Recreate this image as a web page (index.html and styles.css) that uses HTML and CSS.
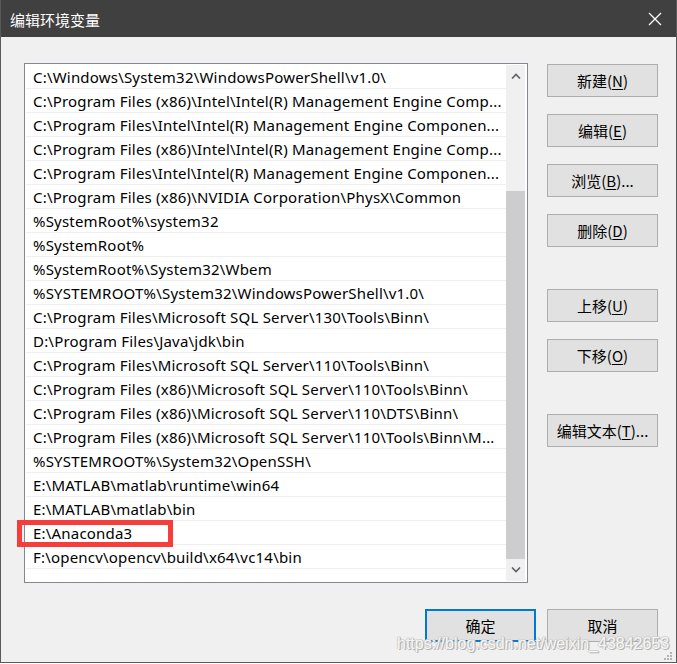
FILE: index.html
```html
<!DOCTYPE html>
<html lang="zh-CN">
<head>
  <meta charset="UTF-8" />
  <meta name="viewport" content="width=device-width, initial-scale=1.0"/>
  <title>编辑环境变量</title>
  <link rel="stylesheet" href="styles.css">
</head>
<body>
  <div class="window">
    <div class="titlebar">
      <span class="title">编辑环境变量</span>
      <svg class="close" width="14" height="14" viewBox="0 0 14 14">
        <path d="M1 1 L13 13 M13 1 L1 13" stroke="#fff" stroke-width="1.3" fill="none"/>
      </svg>
    </div>

    <div class="client">
      <div class="main">
        <div class="list">
          <div class="rows">
            <div class="row">C:\Windows\System32\WindowsPowerShell\v1.0\</div>
            <div class="row">C:\Program Files (x86)\Intel\Intel(R) Management Engine Comp...</div>
            <div class="row">C:\Program Files\Intel\Intel(R) Management Engine Componen...</div>
            <div class="row">C:\Program Files (x86)\Intel\Intel(R) Management Engine Comp...</div>
            <div class="row">C:\Program Files\Intel\Intel(R) Management Engine Componen...</div>
            <div class="row">C:\Program Files (x86)\NVIDIA Corporation\PhysX\Common</div>
            <div class="row">%SystemRoot%\system32</div>
            <div class="row">%SystemRoot%</div>
            <div class="row">%SystemRoot%\System32\Wbem</div>
            <div class="row">%SYSTEMROOT%\System32\WindowsPowerShell\v1.0\</div>
            <div class="row">C:\Program Files\Microsoft SQL Server\130\Tools\Binn\</div>
            <div class="row">D:\Program Files\Java\jdk\bin</div>
            <div class="row">C:\Program Files\Microsoft SQL Server\110\Tools\Binn\</div>
            <div class="row">C:\Program Files (x86)\Microsoft SQL Server\110\Tools\Binn\</div>
            <div class="row">C:\Program Files (x86)\Microsoft SQL Server\110\DTS\Binn\</div>
            <div class="row">C:\Program Files (x86)\Microsoft SQL Server\110\Tools\Binn\M...</div>
            <div class="row">%SYSTEMROOT%\System32\OpenSSH\</div>
            <div class="row">E:\MATLAB\matlab\runtime\win64</div>
            <div class="row">E:\MATLAB\matlab\bin</div>
            <div class="row">E:\Anaconda3</div>
            <div class="row">F:\opencv\opencv\build\x64\vc14\bin</div>
          </div>
          <div class="scrollbar">
            <div class="sb-btn">
              <svg width="10" height="6" viewBox="0 0 10 6"><polyline points="1,5.5 5,1.5 9,5.5" fill="none" stroke="#606060" stroke-width="1.6"/></svg>
            </div>
            <div class="sb-track"><div class="sb-thumb"></div></div>
            <div class="sb-btn">
              <svg width="10" height="6" viewBox="0 0 10 6"><polyline points="1,0.5 5,4.5 9,0.5" fill="none" stroke="#606060" stroke-width="1.6"/></svg>
            </div>
          </div>
        </div>

        <div class="side">
          <button class="btn">新建(<u>N</u>)</button>
          <button class="btn">编辑(<u>E</u>)</button>
          <button class="btn">浏览(<u>B</u>)...</button>
          <button class="btn">删除(<u>D</u>)</button>
          <button class="btn spaced">上移(<u>U</u>)</button>
          <button class="btn">下移(<u>O</u>)</button>
          <button class="btn spaced">编辑文本(<u>T</u>)...</button>
        </div>
      </div>

      <div class="footer">
        <button class="btn default">确定</button>
        <button class="btn">取消</button>
      </div>
    </div>

    <!-- red marker drawn over the list -->
    <div class="highlight"></div>
    <div class="watermark">https://blog.csdn.net/weixin_43842653</div>
    <svg class="grip" width="9" height="9" viewBox="0 0 9 9">
      <rect x="6" y="0" width="2" height="2" fill="#b4b4b4"/>
      <rect x="3" y="3" width="2" height="2" fill="#b4b4b4"/>
      <rect x="6" y="3" width="2" height="2" fill="#b4b4b4"/>
      <rect x="0" y="6" width="2" height="2" fill="#b4b4b4"/>
      <rect x="3" y="6" width="2" height="2" fill="#b4b4b4"/>
      <rect x="6" y="6" width="2" height="2" fill="#b4b4b4"/>
    </svg>
  </div>
</body>
</html>
```

FILE: styles.css
```css
body {
  margin: 0;
  background: #ffffff;
  font-family: 'Noto Sans', 'Noto Sans CJK SC', sans-serif;
}

.window {
  position: relative;
  width: 677px;
  height: 663px;
  box-sizing: border-box;
  border: 1px solid #5a5a5a;
  border-top: none;
  background: #f0f0f0;
}

.titlebar {
  height: 37px;
  background: #404040;
  display: flex;
  align-items: center;
  justify-content: space-between;
  padding: 2px 14px 0 9px;
  box-sizing: border-box;
}

.title {
  color: #ffffff;
  font-size: 15px;
  font-family: 'Noto Sans CJK SC', sans-serif;
}

.close {
  margin-bottom: 2px;
}

.client {
  padding: 26px 18px 0 23px;
}

.main {
  display: flex;
  gap: 19px;
}

.list {
  width: 504px;
  height: 520px;
  box-sizing: border-box;
  border: 1px solid #828790;
  background: #ffffff;
  padding: 1px 2px 1px 1px;
  display: flex;
}

.rows {
  flex: 1;
  overflow: hidden;
}

.row {
  height: 24px;
  box-sizing: border-box;
  border-bottom: 1px solid #efefef;
  padding: 2px 0 0 7px;
  line-height: 21px;
  font-size: 15px;
  letter-spacing: 0.2px;
  color: #000;
  white-space: nowrap;
  overflow: hidden;
}

.scrollbar {
  width: 19px;
  background: #f0f0f0;
  display: flex;
  flex-direction: column;
}

.sb-btn {
  height: 22px;
  display: flex;
  align-items: center;
  justify-content: center;
}

.sb-track {
  flex: 1;
  display: flex;
  flex-direction: column;
  padding-top: 104px;
}

.sb-thumb {
  flex: 1;
  background: #cdcdcd;
}

.side {
  width: 111px;
  display: flex;
  flex-direction: column;
  gap: 17px;
  padding-top: 1px;
}

.btn {
  width: 111px;
  height: 33px;
  box-sizing: border-box;
  border: 1px solid #adadad;
  background: #e1e1e1;
  font-family: 'Noto Sans CJK SC', sans-serif;
  font-size: 15px;
  color: #000;
  padding: 0;
  cursor: pointer;
}

.btn u {
  text-underline-offset: 2px;
}

.btn.spaced {
  margin-top: 25px;
}

.btn.default {
  border: 2px solid #0078d7;
}

.footer {
  margin-top: 26px;
  display: flex;
  justify-content: flex-end;
  gap: 11px;
}

.highlight {
  position: absolute;
  left: 16px;
  top: 520px;
  width: 156px;
  height: 27px;
  box-sizing: border-box;
  border: 5px solid #f73c3c;
}

.watermark {
  position: absolute;
  left: 396px;
  top: 635px;
  font-family: 'Liberation Sans', Arial, sans-serif;
  font-size: 16px;
  line-height: 18px;
  color: #f6f6f6;
  text-shadow: 1px 1px 0 #b4b4b4, -1px 0 0 #cfcfcf, 0 -1px 0 #d4d4d4, 1px 0 1px #a8a8a8;
}

.grip {
  position: absolute;
  right: 3px;
  bottom: 1px;
}
```
